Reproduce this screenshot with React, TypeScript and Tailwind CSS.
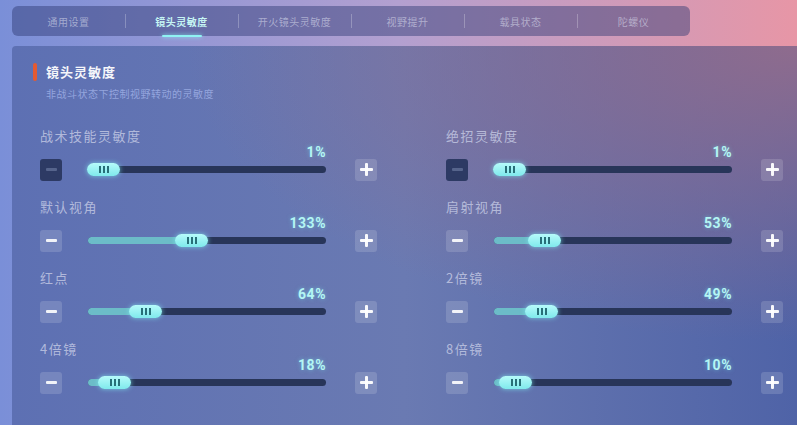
import React from "react";

const tabs = ["通用设置", "镜头灵敏度", "开火镜头灵敏度", "视野提升", "载具状态", "陀螺仪"];

type Row = { label: string; value: number; disabledMinus?: boolean };

const left: Row[] = [
  { label: "战术技能灵敏度", value: 1, disabledMinus: true },
  { label: "默认视角", value: 133 },
  { label: "红点", value: 64 },
  { label: "4倍镜", value: 18 },
];
const right: Row[] = [
  { label: "绝招灵敏度", value: 1, disabledMinus: true },
  { label: "肩射视角", value: 53 },
  { label: "2倍镜", value: 49 },
  { label: "8倍镜", value: 10 },
];

function Minus({ disabled }: { disabled?: boolean }) {
  return (
    <div
      className={
        "w-[22px] h-[22px] rounded-[3px] flex items-center justify-center shrink-0 " +
        (disabled ? "bg-[#2d3a64]" : "bg-white/15")
      }
    >
      <div className={"w-[11px] h-[3px] rounded-[1px] " + (disabled ? "bg-[#56648c]" : "bg-white/90")} />
    </div>
  );
}

function Plus() {
  return (
    <div className="w-[22px] h-[22px] rounded-[3px] bg-white/15 flex items-center justify-center shrink-0 relative">
      <div className="absolute w-[13px] h-[3px] bg-white/95 rounded-[1px]" />
      <div className="absolute w-[3px] h-[13px] bg-white/95 rounded-[1px]" />
    </div>
  );
}

function Slider({ row }: { row: Row }) {
  const offset = Math.round((row.value - 1) * (2 / 3));
  return (
    <div className="flex flex-col">
      <div className="h-[14px] leading-[14px] text-[13px] text-[#c8cde6]/80 tracking-[1.5px]">{row.label}</div>
      <div className="mt-[2px] h-[14px] flex">
        <div className="ml-[48px] w-[238px] flex justify-end">
          <span className="text-[14px] leading-[14px] font-bold text-[#b4f6f4] font-['Roboto','Noto_Sans',sans-serif] tracking-[0.5px] [text-shadow:0_0_4px_rgba(120,240,240,0.5)]">
            {row.value}%
          </span>
        </div>
      </div>
      <div className="h-[22px] flex items-center">
        <Minus disabled={row.disabledMinus} />
        <div className="ml-[26px] w-[238px] h-[7px] rounded-full bg-[#283559] relative">
          <div
            className="absolute left-0 top-0 h-[7px] rounded-full bg-[#78d4dc]/85"
            style={{ width: offset + 12 }}
          />
          <div
            className="absolute top-[-3px] h-[13px] w-[33px] rounded-full bg-[linear-gradient(to_bottom,#b6fbfa,#7fe9ec)] shadow-[0_0_5px_rgba(130,240,245,0.7)] flex items-center justify-center gap-[2px]"
            style={{ left: offset - 1 }}
          >
            <div className="w-[2px] h-[7px] bg-[#276f78]" />
            <div className="w-[2px] h-[7px] bg-[#276f78]" />
            <div className="w-[2px] h-[7px] bg-[#276f78]" />
          </div>
        </div>
        <div className="ml-[29px]">
          <Plus />
        </div>
      </div>
    </div>
  );
}

export default function App() {
  return (
    <div className="w-[797px] h-[425px] overflow-hidden relative bg-[linear-gradient(to_right,#7a8fd8,#b3a0d0_50%,#e796a6)] font-['Noto_Sans_CJK_SC','Noto_Sans',sans-serif]">
      <div className="pt-[6px] pl-[12px]">
        <div className="w-[678px] h-[30px] rounded-[6px] bg-[#2d3870]/45 flex items-center">
          {tabs.map((t, i) => (
            <div key={t} className="w-[113px] h-full relative flex items-center justify-center">
              {i > 0 && <div className="absolute left-0 top-[8px] w-px h-[14px] bg-white/25" />}
              <span
                className={
                  "text-[10px] tracking-[0.5px] " +
                  (i === 1 ? "text-[#c6f6f4] font-bold" : "text-[#d6d8ea]/60")
                }
              >
                {t}
              </span>
              {i === 1 && (
                <div className="absolute bottom-[-1px] left-[37px] w-[40px] h-[2px] rounded-full bg-[#8ff3f3] shadow-[0_0_4px_rgba(140,245,245,0.9)]" />
              )}
            </div>
          ))}
        </div>
      </div>
      <div className="mt-[10px] ml-[12px] h-[380px] rounded-tl-[4px] bg-[radial-gradient(ellipse_at_top_right,rgba(146,108,140,0.95),rgba(146,108,140,0)_55%),linear-gradient(to_right,#5d70b3,#6a7ab2_50%,#4f63a7)]">
        <div className="pt-[16px] pl-[21px] flex items-center">
          <div className="w-[4px] h-[18px] rounded-[2px] bg-[#e45a32]" />
          <span className="ml-[9px] text-[13px] font-bold text-white/95 tracking-[1px]">镜头灵敏度</span>
        </div>
        <div className="mt-[6px] pl-[34px] text-[10px] leading-[12px] text-[#9fb0e6]/85 tracking-[0.5px]">
          非战斗状态下控制视野转动的灵敏度
        </div>
        <div className="mt-[29px] pl-[28px] grid grid-cols-[337px_337px] gap-x-[69px] gap-y-[19px]">
          {left.map((r, i) => (
            <React.Fragment key={i}>
              <Slider row={r} />
              <Slider row={right[i]} />
            </React.Fragment>
          ))}
        </div>
      </div>
    </div>
  );
}
